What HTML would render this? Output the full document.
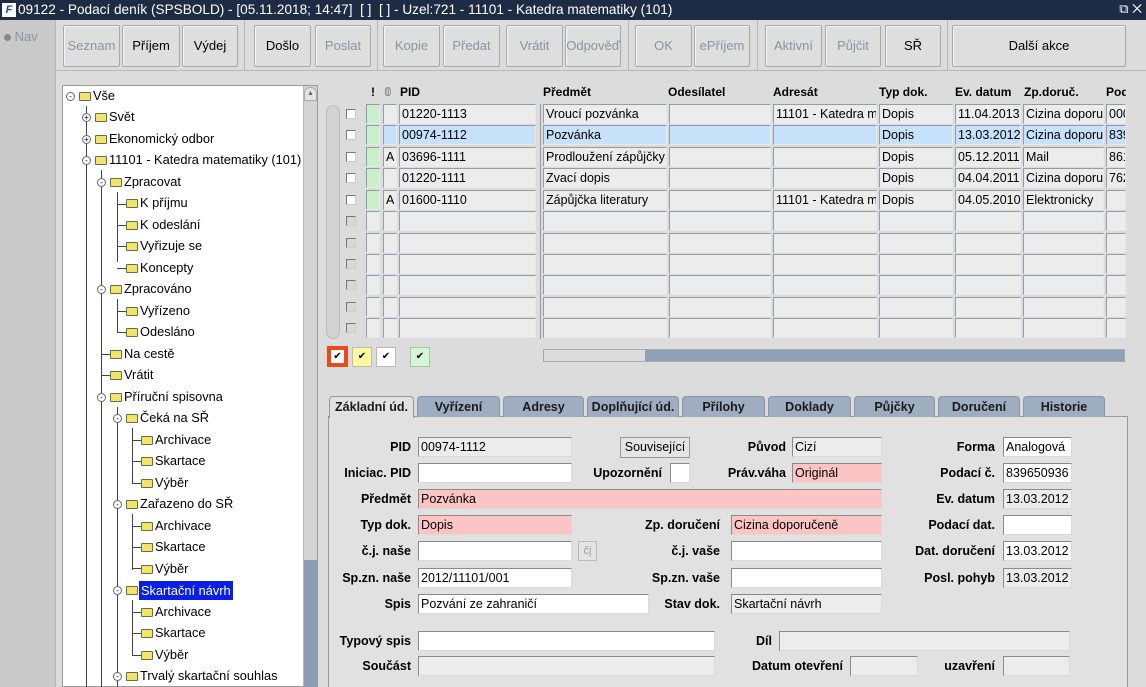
<!DOCTYPE html>
<html><head><meta charset="utf-8">
<style>
*{margin:0;padding:0;box-sizing:border-box}
body{width:1146px;height:687px;overflow:hidden;background:#dcdcdc;font-family:"Liberation Sans",sans-serif;font-size:12px;color:#000;position:relative}
.a{position:absolute}
.tb{left:0;top:0;width:1146px;height:20px;background:#1e2b45;color:#fff;font-size:13.6px;line-height:20px;padding-left:18px;white-space:nowrap}
.btn{position:absolute;top:25px;height:42px;background:#dedede;border:1px solid #a9a9a9;border-radius:2px;box-shadow:inset 1px 1px #f6f6f6;text-align:center;line-height:40px;font-size:13px;color:#000}
.dis{color:#8a93a3}
.r{position:absolute;left:0;height:20px;width:1146px}
.c{position:absolute;top:0;height:20px;background:#ececec;border:1px solid #8f9cab;border-right-color:#e8e8e8;border-bottom-color:#e8e8e8;font-size:12.5px;line-height:18px;padding-left:2px;white-space:nowrap;overflow:hidden}
.g{background:#c9f0c9}
.s{background:#c6e1f9}
.k0{left:366px;width:14px}.k1{left:383px;width:14px}.k2{left:399px;width:137px}.k3{left:543px;width:124px}.k4{left:669px;width:102px}.k5{left:773px;width:104px}.k6{left:879px;width:74px}.k7{left:955px;width:66px}.k8{left:1023px;width:81px}.k9{left:1106px;width:20px}
.cb{position:absolute;left:346px;top:5px;width:10px;height:10px;background:#fff;border:1px solid #777;border-right-color:#ccc;border-bottom-color:#ccc}
.cbg{background:#d8d8d8}
.h{position:absolute;top:85px;font-weight:bold;font-size:12px}
.t{position:absolute;height:20px;line-height:20px;font-size:12.8px;white-space:nowrap}
.fo{position:absolute;width:12px;height:9px;background:#f2e56a;border:1px solid #6b6b50;border-radius:1px}
.ex{position:absolute;width:9px;height:9px;border:1px solid #666;border-radius:50%;background:#fff;font-size:8px;line-height:7px;text-align:center}
.vl{position:absolute;width:1px;background:#444}
.hl{position:absolute;height:1px;background:#444}
.tab{position:absolute;top:396px;height:21px;background:#9eadc0;border:1px solid #8595aa;border-bottom:none;border-radius:4px 4px 0 0;font-weight:bold;font-size:12.5px;text-align:center;line-height:20px;color:#1a1a1a}
.l{position:absolute;font-weight:bold;font-size:12.5px;text-align:right;white-space:nowrap;line-height:20px;height:20px}
.f{position:absolute;height:20px;background:#fff;border:1px solid #8a8a8a;border-right-color:#dadada;border-bottom-color:#dadada;font-size:12.5px;line-height:18px;padding-left:2px;white-space:nowrap;overflow:hidden}
.gr{background:#ececec}
.pk{background:#fdc4c4}
</style></head><body>
<div class="a tb">09122 - Podací deník (SPSBOLD) - [05.11.2018; 14:47]&nbsp; [ ]&nbsp; [ ] - Uzel:721 - 11101 - Katedra matematiky (101)</div>
<div class="a" style="left:2px;top:3px;width:14px;height:14px;background:#fff;color:#1e4bb0;font-size:11px;font-weight:bold;line-height:14px;text-align:center;font-style:italic">F</div>
<div class="a" style="right:4px;top:0;color:#fff;font-size:13px;line-height:18px">⧉ ✕</div>
<div class="a" style="left:0;top:20px;width:56px;height:667px;background:#c9c9c9;border-right:1px solid #b5b5b5"></div>
<div class="a" style="left:4px;top:29px;color:#8a93a3;font-size:13px"><span style="display:inline-block;width:7px;height:7px;border-radius:50%;background:#888"></span> Nav</div>
<div class="a" style="left:56px;top:70px;width:1126px;height:1px;background:#b8b8b8"></div>
<div class="a" style="left:244px;top:20px;width:1px;height:50px;background:#b8b8b8"></div>
<div class="a" style="left:377px;top:20px;width:1px;height:50px;background:#b8b8b8"></div>
<div class="a" style="left:628px;top:20px;width:1px;height:50px;background:#b8b8b8"></div>
<div class="a" style="left:757px;top:20px;width:1px;height:50px;background:#b8b8b8"></div>
<div class="a" style="left:947px;top:20px;width:1px;height:50px;background:#b8b8b8"></div>

<div class="btn dis" style="left:63px;width:57px">Seznam</div>
<div class="btn" style="left:122px;width:58px">Příjem</div>
<div class="btn" style="left:182px;width:56px">Výdej</div>
<div class="btn" style="left:254px;width:57px">Došlo</div>
<div class="btn dis" style="left:315px;width:56px">Poslat</div>
<div class="btn dis" style="left:383px;width:57px">Kopie</div>
<div class="btn dis" style="left:443px;width:57px">Předat</div>
<div class="btn dis" style="left:506px;width:57px">Vrátit</div>
<div class="btn dis" style="left:565px;width:56px">Odpověď</div>
<div class="btn dis" style="left:635px;width:57px">OK</div>
<div class="btn dis" style="left:694px;width:56px">ePříjem</div>
<div class="btn dis" style="left:765px;width:57px">Aktivní</div>
<div class="btn dis" style="left:825px;width:56px">Půjčit</div>
<div class="btn" style="left:885px;width:56px">SŘ</div>
<div class="btn" style="left:952px;width:174px">Další akce</div>

<!-- tree -->
<div class="a" style="left:62px;top:85px;width:256px;height:602px;background:#fff;border:1px solid #9a9a9a"></div>
<div class="a" style="left:303px;top:86px;width:14px;height:601px;background:#d4d4d4;border-left:1px solid #bbb"></div>
<div class="a" style="left:304px;top:560px;width:13px;height:127px;background:#8d9db2"></div>
<div class="a" style="left:304px;top:87px;width:13px;height:14px;background:#e4e4e4;border:1px solid #aaa;border-radius:6px 6px 0 0;font-size:7px;text-align:center;line-height:12px;color:#667">▲</div>

<div class="vl" style="left:86px;top:106px;height:581px"></div>
<div class="vl" style="left:101px;top:170px;height:517px"></div>
<div class="vl" style="left:117px;top:192px;height:70px"></div>
<div class="vl" style="left:117px;top:299px;height:34px"></div>
<div class="vl" style="left:117px;top:407px;height:280px"></div>
<div class="vl" style="left:132px;top:428px;height:56px"></div>
<div class="vl" style="left:132px;top:514px;height:56px"></div>
<div class="vl" style="left:132px;top:600px;height:56px"></div>
<div class="hl" style="left:117px;top:204px;width:9px"></div>
<div class="hl" style="left:117px;top:225px;width:9px"></div>
<div class="hl" style="left:117px;top:246px;width:9px"></div>
<div class="hl" style="left:117px;top:268px;width:9px"></div>
<div class="hl" style="left:117px;top:311px;width:9px"></div>
<div class="hl" style="left:117px;top:332px;width:9px"></div>
<div class="hl" style="left:101px;top:354px;width:9px"></div>
<div class="hl" style="left:101px;top:375px;width:9px"></div>
<div class="hl" style="left:132px;top:440px;width:9px"></div>
<div class="hl" style="left:132px;top:461px;width:9px"></div>
<div class="hl" style="left:132px;top:483px;width:9px"></div>
<div class="hl" style="left:132px;top:526px;width:9px"></div>
<div class="hl" style="left:132px;top:547px;width:9px"></div>
<div class="hl" style="left:132px;top:568px;width:9px"></div>
<div class="hl" style="left:132px;top:612px;width:9px"></div>
<div class="hl" style="left:132px;top:633px;width:9px"></div>
<div class="hl" style="left:132px;top:655px;width:9px"></div>
<div class="ex" style="left:66px;top:92px">-</div>
<div class="ex" style="left:82px;top:113px">+</div>
<div class="ex" style="left:82px;top:135px">+</div>
<div class="ex" style="left:82px;top:156px">-</div>
<div class="ex" style="left:97px;top:178px">-</div>
<div class="ex" style="left:97px;top:285px">-</div>
<div class="ex" style="left:97px;top:393px">-</div>
<div class="ex" style="left:113px;top:414px">-</div>
<div class="ex" style="left:113px;top:500px">-</div>
<div class="ex" style="left:113px;top:586px">-</div>
<div class="ex" style="left:113px;top:672px">-</div>

<div class="fo" style="left:79px;top:92px"></div><div class="t" style="left:93px;top:86px">Vše</div>
<div class="fo" style="left:95px;top:113px"></div><div class="t" style="left:109px;top:107px">Svět</div>
<div class="fo" style="left:95px;top:135px"></div><div class="t" style="left:109px;top:129px">Ekonomický odbor</div>
<div class="fo" style="left:95px;top:156px"></div><div class="t" style="left:109px;top:150px">11101 - Katedra matematiky (101)</div>
<div class="fo" style="left:110px;top:178px"></div><div class="t" style="left:124px;top:172px">Zpracovat</div>
<div class="fo" style="left:126px;top:199px"></div><div class="t" style="left:140px;top:193px">K příjmu</div>
<div class="fo" style="left:126px;top:221px"></div><div class="t" style="left:140px;top:215px">K odeslání</div>
<div class="fo" style="left:126px;top:242px"></div><div class="t" style="left:140px;top:236px">Vyřizuje se</div>
<div class="fo" style="left:126px;top:264px"></div><div class="t" style="left:140px;top:258px">Koncepty</div>
<div class="fo" style="left:110px;top:285px"></div><div class="t" style="left:124px;top:279px">Zpracováno</div>
<div class="fo" style="left:126px;top:307px"></div><div class="t" style="left:140px;top:301px">Vyřízeno</div>
<div class="fo" style="left:126px;top:328px"></div><div class="t" style="left:140px;top:322px">Odesláno</div>
<div class="fo" style="left:110px;top:350px"></div><div class="t" style="left:124px;top:344px">Na cestě</div>
<div class="fo" style="left:110px;top:371px"></div><div class="t" style="left:124px;top:365px">Vrátit</div>
<div class="fo" style="left:110px;top:393px"></div><div class="t" style="left:124px;top:387px">Příruční spisovna</div>
<div class="fo" style="left:126px;top:414px"></div><div class="t" style="left:140px;top:408px">Čeká na SŘ</div>
<div class="fo" style="left:141px;top:436px"></div><div class="t" style="left:155px;top:430px">Archivace</div>
<div class="fo" style="left:141px;top:457px"></div><div class="t" style="left:155px;top:451px">Skartace</div>
<div class="fo" style="left:141px;top:479px"></div><div class="t" style="left:155px;top:473px">Výběr</div>
<div class="fo" style="left:126px;top:500px"></div><div class="t" style="left:140px;top:494px">Zařazeno do SŘ</div>
<div class="fo" style="left:141px;top:522px"></div><div class="t" style="left:155px;top:516px">Archivace</div>
<div class="fo" style="left:141px;top:543px"></div><div class="t" style="left:155px;top:537px">Skartace</div>
<div class="fo" style="left:141px;top:565px"></div><div class="t" style="left:155px;top:559px">Výběr</div>
<div class="fo" style="left:126px;top:586px"></div><div class="t" style="left:139px;top:581px;height:19px;line-height:19px;background:#0a1ee6;color:#fff;padding:0 2px">Skartační návrh</div>
<div class="fo" style="left:141px;top:608px"></div><div class="t" style="left:155px;top:602px">Archivace</div>
<div class="fo" style="left:141px;top:629px"></div><div class="t" style="left:155px;top:623px">Skartace</div>
<div class="fo" style="left:141px;top:651px"></div><div class="t" style="left:155px;top:645px">Výběr</div>
<div class="fo" style="left:126px;top:672px"></div><div class="t" style="left:140px;top:666px">Trvalý skartační souhlas</div>

<!-- grid -->
<div class="h" style="left:371px">!</div>
<div class="h" style="left:384px;font-weight:normal;color:#666">𝟘</div>
<div class="h" style="left:400px">PID</div>
<div class="h" style="left:543px">Předmět</div>
<div class="h" style="left:668px">Odesílatel</div>
<div class="h" style="left:773px">Adresát</div>
<div class="h" style="left:879px">Typ dok.</div>
<div class="h" style="left:955px">Ev. datum</div>
<div class="h" style="left:1024px">Zp.doruč.</div>
<div class="h" style="left:1106px;width:20px;overflow:hidden">Pod</div>
<div class="a" style="left:326px;top:105px;width:14px;height:234px;background:#d2d2d2;border:1px solid #bbb;border-radius:7px"></div>
<div class="a" style="left:540px;top:104px;width:1px;height:235px;background:#999"></div>

<div class="r" style="top:104px"><i class="cb"></i><div class="c k0 g"></div><div class="c k1"></div><div class="c k2">01220-1113</div><div class="c k3">Vroucí pozvánka</div><div class="c k4"></div><div class="c k5">11101 - Katedra m</div><div class="c k6">Dopis</div><div class="c k7">11.04.2013</div><div class="c k8">Cizina doporuč</div><div class="c k9">000</div></div>
<div class="r" style="top:125px"><i class="cb"></i><div class="c k0 g"></div><div class="c k1 s"></div><div class="c k2 s">00974-1112</div><div class="c k3 s">Pozvánka</div><div class="c k4 s"></div><div class="c k5 s"></div><div class="c k6 s">Dopis</div><div class="c k7 s">13.03.2012</div><div class="c k8 s">Cizina doporuč</div><div class="c k9 s">839</div></div>
<div class="r" style="top:147px"><i class="cb"></i><div class="c k0 g"></div><div class="c k1">A</div><div class="c k2">03696-1111</div><div class="c k3">Prodloužení zápůjčky</div><div class="c k4"></div><div class="c k5"></div><div class="c k6">Dopis</div><div class="c k7">05.12.2011</div><div class="c k8">Mail</div><div class="c k9">861</div></div>
<div class="r" style="top:168px"><i class="cb"></i><div class="c k0 g"></div><div class="c k1"></div><div class="c k2">01220-1111</div><div class="c k3">Zvací dopis</div><div class="c k4"></div><div class="c k5"></div><div class="c k6">Dopis</div><div class="c k7">04.04.2011</div><div class="c k8">Cizina doporuč</div><div class="c k9">762</div></div>
<div class="r" style="top:190px"><i class="cb"></i><div class="c k0 g"></div><div class="c k1">A</div><div class="c k2">01600-1110</div><div class="c k3">Zápůjčka literatury</div><div class="c k4"></div><div class="c k5">11101 - Katedra m</div><div class="c k6">Dopis</div><div class="c k7">04.05.2010</div><div class="c k8">Elektronicky</div><div class="c k9"></div></div>
<div class="r" style="top:211px"><i class="cb cbg"></i><div class="c k0"></div><div class="c k1"></div><div class="c k2"></div><div class="c k3"></div><div class="c k4"></div><div class="c k5"></div><div class="c k6"></div><div class="c k7"></div><div class="c k8"></div><div class="c k9"></div></div>
<div class="r" style="top:233px"><i class="cb cbg"></i><div class="c k0"></div><div class="c k1"></div><div class="c k2"></div><div class="c k3"></div><div class="c k4"></div><div class="c k5"></div><div class="c k6"></div><div class="c k7"></div><div class="c k8"></div><div class="c k9"></div></div>
<div class="r" style="top:254px"><i class="cb cbg"></i><div class="c k0"></div><div class="c k1"></div><div class="c k2"></div><div class="c k3"></div><div class="c k4"></div><div class="c k5"></div><div class="c k6"></div><div class="c k7"></div><div class="c k8"></div><div class="c k9"></div></div>
<div class="r" style="top:275px"><i class="cb cbg"></i><div class="c k0"></div><div class="c k1"></div><div class="c k2"></div><div class="c k3"></div><div class="c k4"></div><div class="c k5"></div><div class="c k6"></div><div class="c k7"></div><div class="c k8"></div><div class="c k9"></div></div>
<div class="r" style="top:297px"><i class="cb cbg"></i><div class="c k0"></div><div class="c k1"></div><div class="c k2"></div><div class="c k3"></div><div class="c k4"></div><div class="c k5"></div><div class="c k6"></div><div class="c k7"></div><div class="c k8"></div><div class="c k9"></div></div>
<div class="r" style="top:318px"><i class="cb cbg"></i><div class="c k0"></div><div class="c k1"></div><div class="c k2"></div><div class="c k3"></div><div class="c k4"></div><div class="c k5"></div><div class="c k6"></div><div class="c k7"></div><div class="c k8"></div><div class="c k9"></div></div>

<div class="a" style="left:327px;top:346px;width:21px;height:21px;background:#e84a1a;padding:4px"><div style="background:#fff;width:13px;height:13px;font-size:10px;line-height:13px;text-align:center">✔</div></div>
<div class="a" style="left:352px;top:347px;width:20px;height:20px;background:#fff8a0;border:1px solid #bbb;font-size:10px;line-height:18px;text-align:center">✔</div>
<div class="a" style="left:376px;top:347px;width:20px;height:20px;background:#fff;border:1px solid #bbb;font-size:10px;line-height:18px;text-align:center">✔</div>
<div class="a" style="left:410px;top:347px;width:20px;height:20px;background:#d6f5d6;border:1px solid #9c9;font-size:10px;line-height:18px;text-align:center">✔</div>
<div class="a" style="left:543px;top:349px;width:582px;height:13px;background:#8fa1b8;border:1px solid #aaa"></div>
<div class="a" style="left:544px;top:350px;width:101px;height:11px;background:#dcdcdc"></div>

<!-- tabs -->
<div class="a" style="left:328px;top:416px;width:800px;height:271px;background:#e1e1e1;border:1px solid #999;border-bottom:none"></div>
<div class="tab" style="left:329px;width:85px;background:#e1e1e1;height:22px;border-color:#999">Základní úd.</div>
<div class="tab" style="left:417px;width:83px">Vyřízení</div>
<div class="tab" style="left:503px;width:81px">Adresy</div>
<div class="tab" style="left:587px;width:92px">Doplňující úd.</div>
<div class="tab" style="left:682px;width:83px">Přílohy</div>
<div class="tab" style="left:768px;width:83px">Doklady</div>
<div class="tab" style="left:854px;width:81px">Půjčky</div>
<div class="tab" style="left:938px;width:82px">Doručení</div>
<div class="tab" style="left:1023px;width:82px">Historie</div>

<div class="l" style="right:735px;top:437px">PID</div><div class="f gr" style="left:418px;top:437px;width:154px">00974-1112</div>
<div class="a" style="left:620px;top:437px;width:70px;height:21px;background:#e4e4e4;border:1px solid #999;font-size:12.5px;text-align:center;line-height:19px">Související</div>
<div class="l" style="right:360px;top:437px">Původ</div><div class="f gr" style="left:792px;top:437px;width:90px">Cizí</div>
<div class="l" style="right:151px;top:437px">Forma</div><div class="f" style="left:1003px;top:437px;width:69px">Analogová</div>

<div class="l" style="right:735px;top:463px">Iniciac. PID</div><div class="f" style="left:418px;top:463px;width:154px"></div>
<div class="l" style="right:484px;top:463px">Upozornění</div><div class="f" style="left:670px;top:463px;width:20px"></div>
<div class="l" style="right:360px;top:463px">Práv.váha</div><div class="f pk" style="left:792px;top:463px;width:90px">Originál</div>
<div class="l" style="right:151px;top:463px">Podací č.</div><div class="f" style="left:1003px;top:463px;width:69px">839650936</div>

<div class="l" style="right:735px;top:489px">Předmět</div><div class="f pk" style="left:418px;top:489px;width:464px">Pozvánka</div>
<div class="l" style="right:151px;top:489px">Ev. datum</div><div class="f gr" style="left:1003px;top:489px;width:69px">13.03.2012 (</div>

<div class="l" style="right:735px;top:515px">Typ dok.</div><div class="f pk" style="left:418px;top:515px;width:154px">Dopis</div>
<div class="l" style="right:426px;top:515px">Zp. doručení</div><div class="f pk" style="left:731px;top:515px;width:151px">Cizina doporučeně</div>
<div class="l" style="right:151px;top:515px">Podací dat.</div><div class="f" style="left:1003px;top:515px;width:69px"></div>

<div class="l" style="right:735px;top:541px">č.j. naše</div><div class="f" style="left:418px;top:541px;width:154px"></div>
<div class="a" style="left:578px;top:541px;width:19px;height:20px;border:1px solid #bbb;background:#e4e4e4;color:#99a;font-size:11px;text-align:center;line-height:18px">čj</div>
<div class="l" style="right:426px;top:541px">č.j. vaše</div><div class="f" style="left:731px;top:541px;width:151px"></div>
<div class="l" style="right:151px;top:541px">Dat. doručení</div><div class="f" style="left:1003px;top:541px;width:69px">13.03.2012</div>

<div class="l" style="right:735px;top:568px">Sp.zn. naše</div><div class="f" style="left:418px;top:568px;width:154px">2012/11101/001</div>
<div class="l" style="right:426px;top:568px">Sp.zn. vaše</div><div class="f" style="left:731px;top:568px;width:151px"></div>
<div class="l" style="right:151px;top:568px">Posl. pohyb</div><div class="f gr" style="left:1003px;top:568px;width:69px">13.03.2012</div>

<div class="l" style="right:735px;top:594px">Spis</div><div class="f" style="left:418px;top:594px;width:231px">Pozvání ze zahraničí</div>
<div class="l" style="right:426px;top:594px">Stav dok.</div><div class="f gr" style="left:731px;top:594px;width:151px">Skartační návrh</div>

<div class="l" style="right:735px;top:631px">Typový spis</div><div class="f" style="left:418px;top:631px;width:297px"></div>
<div class="l" style="right:374px;top:631px">Díl</div><div class="f gr" style="left:779px;top:631px;width:291px"></div>

<div class="l" style="right:735px;top:656px">Součást</div><div class="f gr" style="left:418px;top:656px;width:297px"></div>
<div class="l" style="right:303px;top:656px">Datum otevření</div><div class="f gr" style="left:850px;top:656px;width:68px"></div>
<div class="l" style="right:151px;top:656px">uzavření</div><div class="f gr" style="left:1003px;top:656px;width:67px"></div>
</body></html>
